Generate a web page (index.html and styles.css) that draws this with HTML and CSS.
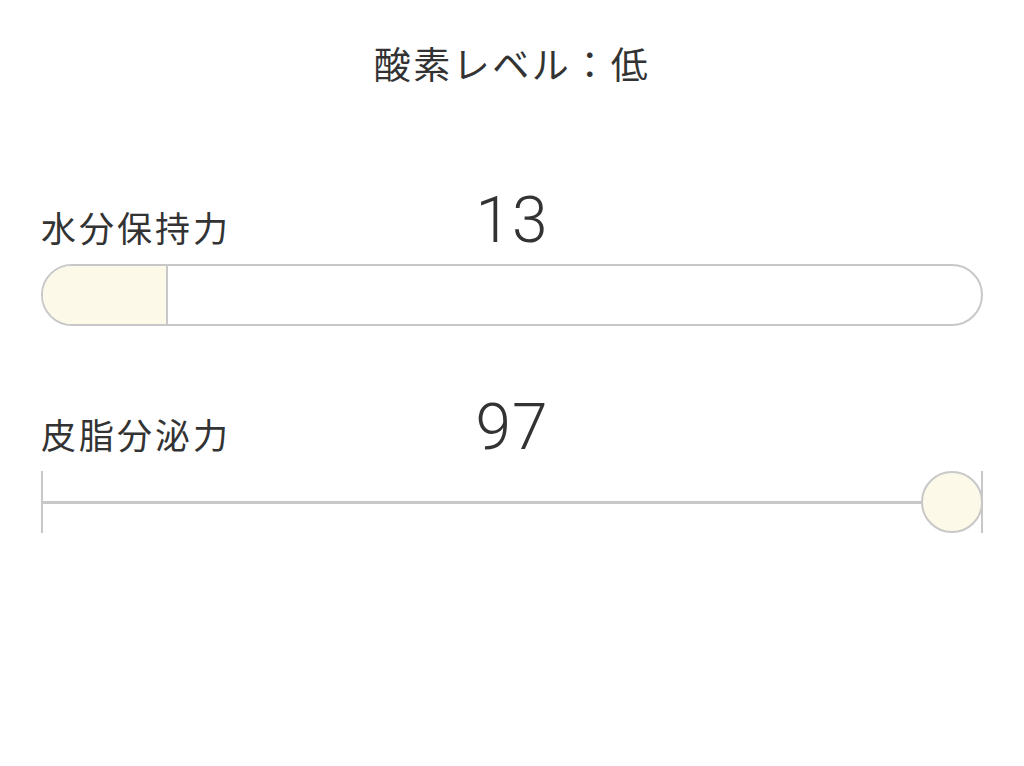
FILE: index.html
```html
<!DOCTYPE html>
<html lang="ja">
<head>
<meta charset="utf-8">
<link rel="stylesheet" href="styles.css">
</head>
<body>
<main class="page">
  <h1 class="title">酸素レベル：低</h1>
  <section class="metric metric-first">
    <div class="metric-head">
      <span class="label">水分保持力</span>
      <span class="value">13</span>
      <span></span>
    </div>
    <div class="bar">
      <div class="bar-fill" style="width:13.3%"></div>
    </div>
  </section>
  <section class="metric metric-second">
    <div class="metric-head">
      <span class="label">皮脂分泌力</span>
      <span class="value">97</span>
      <span></span>
    </div>
    <div class="slider">
      <div class="slider-track"></div>
      <div class="slider-thumb"></div>
    </div>
  </section>
</main>
</body>
</html>
```
FILE: styles.css
```css
html, body {
  margin: 0;
  padding: 0;
  background: #ffffff;
}
body {
  font-family: "Noto Sans CJK JP", "Noto Sans", sans-serif;
  color: #333333;
}
.page {
  width: 1024px;
  height: 766px;
  box-sizing: border-box;
  padding: 0 41px;
}
.title {
  margin: 0;
  padding-top: 36px;
  text-align: center;
  font-size: 37px;
  font-weight: 400;
  line-height: 54px;
  letter-spacing: 2.5px;
}
.metric-first {
  margin-top: 92px;
}
.metric-second {
  margin-top: 63px;
}
.metric-head {
  display: grid;
  grid-template-columns: 1fr auto 1fr;
  align-items: center;
  height: 82px;
}
.label {
  font-size: 35px;
  line-height: 40px;
  align-self: end;
  margin-bottom: 17px;
  letter-spacing: 3px;
}
.value {
  font-family: "Roboto", "Liberation Sans", sans-serif;
  font-size: 64px;
  line-height: 64px;
  font-weight: 300;
  margin-top: -4px;
  letter-spacing: 1px;
}
.bar {
  height: 62px;
  box-sizing: border-box;
  border: 2px solid #c8c8c8;
  border-radius: 31px;
  overflow: hidden;
  background: #ffffff;
}
.bar-fill {
  height: 100%;
  background: #fdf9e9;
  border-right: 2px solid #c8c8c8;
  box-sizing: border-box;
}
.slider {
  position: relative;
  height: 62px;
  border-left: 2px solid #c8c8c8;
  border-right: 2px solid #c8c8c8;
  display: flex;
  align-items: center;
}
.slider-track {
  flex: 1;
  height: 3px;
  background: #c8c8c8;
}
.slider-thumb {
  position: absolute;
  right: -2px;
  top: 0;
  width: 62px;
  height: 62px;
  box-sizing: border-box;
  border-radius: 50%;
  border: 2px solid #c8c8c8;
  background: #fdf9e9;
}
```
